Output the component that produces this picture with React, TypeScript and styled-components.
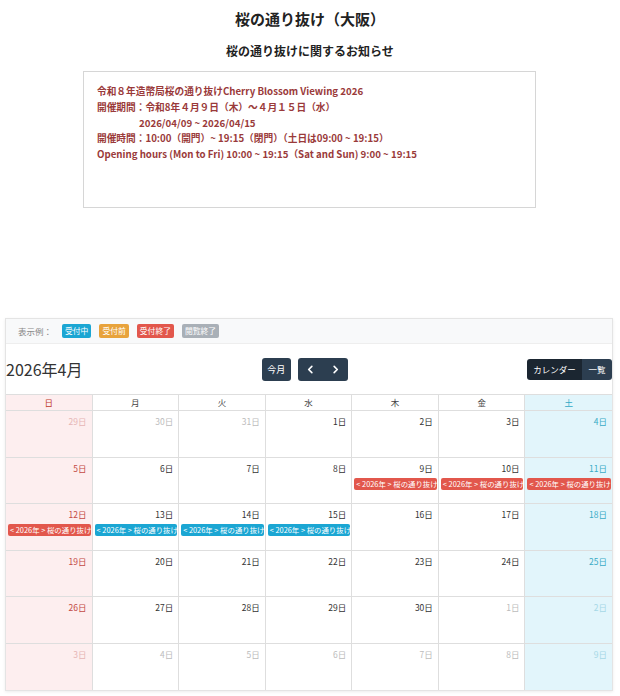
import React from 'react'
import styled, {createGlobalStyle} from 'styled-components'

const GlobalStyle = createGlobalStyle`
  html, body {
    margin: 0;
    padding: 0;
    background: #fff;
    font-family: "Noto Sans CJK JP", "Noto Sans", sans-serif;
    color: #333;
  }
`

const colors = {
  open: '#1ba6d3',
  before: '#e8a33c',
  closed: '#e2574c',
  ended: '#a9b0b7',
  navy: '#2c3e50',
  navyDark: '#1b2631',
  line: '#dedede',
  sunBg: '#fdeeef',
  satBg: '#e2f5fb',
}

type Kind = 'open' | 'before' | 'closed' | 'ended'

const Page = styled.div`
  width: 620px;
  padding-top: 8px;
  padding-bottom: 6px;
`

const Title = styled.h1`
  margin: 0;
  text-align: center;
  font-size: 15px;
  line-height: 22px;
  font-weight: 700;
  color: #222;
`

const Subtitle = styled.h2`
  margin: 12px 0 0;
  text-align: center;
  font-size: 12px;
  line-height: 18px;
  font-weight: 700;
  color: #222;
`

const Notice = styled.div`
  box-sizing: border-box;
  width: 453px;
  height: 137px;
  margin: 11px 0 0 83px;
  padding: 12px 13px;
  border: 1px solid #d6d6d6;
  color: #9a3a3a;
  font-size: 9.7px;
  font-weight: 700;
  line-height: 15.8px;
`

const NoticeLine = styled.div<{$indent?: boolean}>`
  white-space: nowrap;
  padding-left: ${p => (p.$indent ? '42px' : '0')};
`

const Card = styled.div`
  box-sizing: border-box;
  width: 608px;
  margin: 110px 0 0 5px;
  border: 1px solid #e4e4e4;
  box-shadow: 0 1px 3px rgba(0, 0, 0, 0.08);
`

const Legend = styled.div`
  height: 24px;
  display: flex;
  align-items: center;
  gap: 8px;
  padding-left: 12px;
  background: #f8f9fa;
  border-bottom: 1px solid #eee;
  font-size: 8.5px;
  color: #888;
`

const LegendLabel = styled.span`
  margin-right: 2px;
`

const Badge = styled.span<{$kind: Kind}>`
  display: inline-block;
  padding: 0 3px;
  height: 14px;
  line-height: 14px;
  border-radius: 2px;
  font-size: 7.8px;
  color: #fff;
  background: ${p => colors[p.$kind]};
`

const Toolbar = styled.div`
  height: 50px;
  display: flex;
  align-items: center;
  justify-content: space-between;
`

const MonthTitle = styled.div`
  font-size: 16px;
  color: #333;
  line-height: 20px;
`

const Group = styled.div`
  display: flex;
  align-items: center;
  gap: 7px;
`

const NavButton = styled.button<{$w: number}>`
  width: ${p => p.$w}px;
  height: 23px;
  padding: 0;
  border: none;
  border-radius: 3px;
  background: ${colors.navy};
  color: #fff;
  font-family: inherit;
  font-size: 9px;
  display: flex;
  align-items: center;
  justify-content: space-around;
`

const Toggle = styled.div`
  display: flex;
  height: 21px;
  border-radius: 3px;
  overflow: hidden;
`

const ToggleItem = styled.div<{$active?: boolean; $w: number}>`
  width: ${p => p.$w}px;
  display: flex;
  align-items: center;
  justify-content: center;
  font-size: 8.5px;
  color: #fff;
  background: ${p => (p.$active ? colors.navyDark : colors.navy)};
`

const Grid = styled.div`
  display: grid;
  grid-template-columns: repeat(7, 1fr);
  grid-template-rows: 16px repeat(6, 46.5px);
  border-top: 1px solid ${colors.line};
`

const dayBg = (d: number) => (d === 0 ? colors.sunBg : d === 6 ? colors.satBg : '#fff')

const HeadCell = styled.div<{$d: number}>`
  background: ${p => dayBg(p.$d)};
  border-right: ${p => (p.$d === 6 ? 'none' : `1px solid ${colors.line}`)};
  border-bottom: 1px solid ${colors.line};
  text-align: center;
  font-size: 8.5px;
  line-height: 15px;
  color: ${p => (p.$d === 0 ? '#c0392b' : p.$d === 6 ? '#33a9c6' : '#444')};
`

const DayCell = styled.div<{$d: number; $last: boolean}>`
  min-width: 0;
  background: ${p => dayBg(p.$d)};
  border-right: ${p => (p.$d === 6 ? 'none' : `1px solid ${colors.line}`)};
  border-bottom: ${p => (p.$last ? 'none' : `1px solid ${colors.line}`)};
  display: flex;
  flex-direction: column;
`

const dayColor = (d: number, other: boolean) => {
  if (d === 0) return other ? '#e6b5b5' : '#c34a45'
  if (d === 6) return other ? '#a6d8e6' : '#3aabc6'
  return other ? '#bcbcbc' : '#333'
}

const DayNum = styled.div<{$d: number; $other: boolean}>`
  text-align: right;
  padding: 4px 5px 0 0;
  font-size: 8.5px;
  line-height: 13px;
  color: ${p => dayColor(p.$d, p.$other)};
`

const Event = styled.div<{$kind: Kind}>`
  margin: 3px 1px 0 2px;
  height: 12px;
  line-height: 12px;
  padding-left: 2px;
  border-radius: 2px;
  background: ${p => colors[p.$kind]};
  color: #fff;
  font-size: 7.4px;
  white-space: nowrap;
  overflow: hidden;
`

const Chevron = ({dir}: {dir: 'left' | 'right'}) => (
  <svg width="9" height="9" viewBox="0 0 10 10" fill="none" stroke="#fff" strokeWidth="1.8" strokeLinecap="round" strokeLinejoin="round">
    {dir === 'left' ? <path d="M6.5 1.5 3 5l3.5 3.5" /> : <path d="M3.5 1.5 7 5 3.5 8.5" />}
  </svg>
)

const weekNames = ['日', '月', '火', '水', '木', '金', '土']

const events: Record<number, Kind> = {9: 'closed', 10: 'closed', 11: 'closed', 12: 'closed', 13: 'open', 14: 'open', 15: 'open'}

type Day = {n: number; other: boolean}

const buildDays = (): Day[] => {
  const days: Day[] = []
  for (let n = 29; n <= 31; n++) days.push({n, other: true})
  for (let n = 1; n <= 30; n++) days.push({n, other: false})
  for (let n = 1; days.length < 42; n++) days.push({n, other: true})
  return days
}

export default function App() {
  const days = buildDays()
  return (
    <Page>
      <GlobalStyle />
      <Title>桜の通り抜け（大阪）</Title>
      <Subtitle>桜の通り抜けに関するお知らせ</Subtitle>
      <Notice>
        <NoticeLine>令和８年造幣局桜の通り抜けCherry Blossom Viewing 2026</NoticeLine>
        <NoticeLine>開催期間：令和8年４月９日（木）～４月１５日（水）</NoticeLine>
        <NoticeLine $indent>2026/04/09 ~ 2026/04/15</NoticeLine>
        <NoticeLine>開催時間：10:00（開門）~ 19:15（閉門）（土日は09:00 ~ 19:15）</NoticeLine>
        <NoticeLine>Opening hours (Mon to Fri) 10:00 ~ 19:15（Sat and Sun) 9:00 ~ 19:15</NoticeLine>
      </Notice>
      <Card>
        <Legend>
          <LegendLabel>表示例：</LegendLabel>
          <Badge $kind="open">受付中</Badge>
          <Badge $kind="before">受付前</Badge>
          <Badge $kind="closed">受付終了</Badge>
          <Badge $kind="ended">閲覧終了</Badge>
        </Legend>
        <Toolbar>
          <MonthTitle>2026年4月</MonthTitle>
          <Group>
            <NavButton $w={29}>今月</NavButton>
            <NavButton $w={50}>
              <Chevron dir="left" />
              <Chevron dir="right" />
            </NavButton>
          </Group>
          <Toggle>
            <ToggleItem $active $w={55}>カレンダー</ToggleItem>
            <ToggleItem $w={30}>一覧</ToggleItem>
          </Toggle>
        </Toolbar>
        <Grid>
          {weekNames.map((w, i) => (
            <HeadCell key={w} $d={i}>{w}</HeadCell>
          ))}
          {days.map((day, i) => {
            const d = i % 7
            const kind = day.other ? undefined : events[day.n]
            return (
              <DayCell key={i} $d={d} $last={i >= 35}>
                <DayNum $d={d} $other={day.other}>{day.n}日</DayNum>
                {kind && <Event $kind={kind}>&lt; 2026年 &gt; 桜の通り抜け</Event>}
              </DayCell>
            )
          })}
        </Grid>
      </Card>
    </Page>
  )
}
